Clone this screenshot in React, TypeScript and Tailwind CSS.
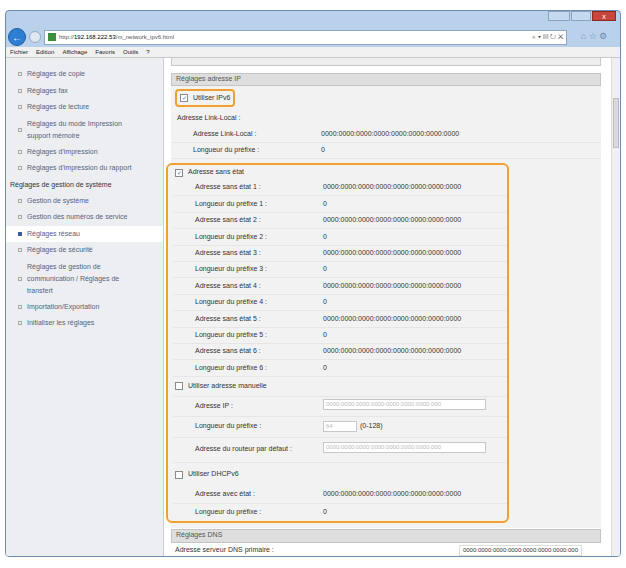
import React from "react";

const Z = "0000:0000:0000:0000:0000:0000:0000:0000";

function Cb({ checked }: { checked?: boolean }) {
  return (
    <span className="inline-flex w-[8px] h-[8px] border border-[#8a8a8a] bg-white items-center justify-center text-[6px] leading-none text-[#3a6fb0] mr-[5px]">
      {checked ? "✓" : ""}
    </span>
  );
}

function Row({ l, v, h = 16 }: { l: string; v?: React.ReactNode; h?: number }) {
  return (
    <div className="flex items-center border-b border-[#e6e6e6]" style={{ height: h }}>
      <div className="w-[150px] pl-[22px]">{l}</div>
      <div className="flex-1 text-[#333]">{v}</div>
    </div>
  );
}

const side: string[] = ["Réglages de copie", "Réglages fax", "Réglages de lecture"];

function SItem({ t, active, lines }: { t: string; active?: boolean; lines?: string[] }) {
  return (
    <div className={`flex items-center pl-[12px] ${active ? "bg-white" : ""}`} style={{ minHeight: 16.5 }}>
      <span className={`w-[4px] h-[4px] mr-[5px] shrink-0 ${active ? "bg-[#3b5a9a]" : "border border-[#aaa]"}`} />
      {lines ? (
        <div className="leading-[12px] py-[2px]">{lines.map((x) => <div key={x}>{x}</div>)}</div>
      ) : (
        <span>{t}</span>
      )}
    </div>
  );
}

const inp = "inline-block w-[163px] h-[11px] border border-[#c8c8c8] bg-white text-[#bbb] text-[6px] leading-[9px] pl-[2px] overflow-hidden whitespace-nowrap";

export default function App() {
  return (
    <div className="w-[626px] h-[568px] bg-white relative" style={{ fontFamily: "'Liberation Sans', Arial, sans-serif" }}>
      <div className="absolute left-[5px] top-[10px] w-[616px] h-[547px] bg-[#b9d1ea] border border-[#6d8cb0] rounded-[4px] flex flex-col overflow-hidden">
        <div className="h-[16px] flex justify-end items-start pr-[4px] gap-[1px]">
          <div className="w-[22px] h-[10px] bg-[#c7d9ee] border border-[#8aa4c4]" />
          <div className="w-[20px] h-[10px] bg-[#c7d9ee] border border-[#8aa4c4]" />
          <div className="w-[24px] h-[10px] bg-[#c9463d] border border-[#8a2a25] text-white text-[7px] leading-[9px] text-center">x</div>
        </div>
        <div className="h-[20px] flex items-center px-[2px] gap-[3px]">
          <div className="w-[18px] h-[18px] rounded-full bg-[#2d7fd3] border border-[#1f5e9f] text-white text-[10px] flex items-center justify-center">←</div>
          <div className="w-[12px] h-[12px] rounded-full bg-[#dfe7f2] border border-[#9aaac0]" />
          <div className="flex-1 h-[15px] bg-white border border-[#8fa5c0] flex items-center px-[3px] text-[6px] text-[#555]">
            <span className="w-[8px] h-[8px] bg-[#3c8d3c] mr-[3px]" />
            <span>http://<b className="text-[#000] font-normal">192.168.222.53</b>/m_network_ipv6.html</span>
            <span className="ml-auto text-[#444] text-[7px]">⌕ ▾ ▤ ↻ ✕</span>
          </div>
          <div className="w-[48px] text-[#6b8bb0] text-[9px] text-center">⌂ ☆ ⚙</div>
        </div>
        <div className="h-[11px] bg-[#f0f0f0] text-[6px] flex items-center gap-[8px] px-[4px] text-[#222] border-b border-[#c8c8c8]">
          <span>Fichier</span><span>Edition</span><span>Affichage</span><span>Favoris</span><span>Outils</span><span>?</span>
        </div>
        <div className="flex-1 flex bg-white text-[7px] text-[#56627a] min-h-0">
          <div className="w-[158px] bg-[#eceef2] border-r border-[#c9ccd2] pt-[8px] leading-[16px]">
            {side.map((t) => <SItem key={t} t={t} />)}
            <SItem t="" lines={["Réglages du mode Impression", "support mémoire"]} />
            <SItem t="Réglages d'impression" />
            <SItem t="Réglages d'impression du rapport" />
            <div className="pl-[4px] text-[#333]">Réglages de gestion de système</div>
            <SItem t="Gestion de système" />
            <SItem t="Gestion des numéros de service" />
            <SItem t="Réglages réseau" active />
            <SItem t="Réglages de sécurité" />
            <SItem t="" lines={["Réglages de gestion de", "communication / Réglages de", "transfert"]} />
            <SItem t="Importation/Exportation" />
            <SItem t="Initialiser les réglages" />
          </div>
          <div className="flex-1 relative px-[7px] text-[#333] overflow-hidden">
            <div className="h-[8px] border border-t-0 border-[#c8c8c8] bg-[#eee] w-[430px]" />
            <div className="mt-[7px] h-[13px] w-[430px] bg-[#dedede] border border-[#c4c4c4] flex items-center px-[4px] text-[#555]">Réglages adresse IP</div>
            <div className="w-[430px] bg-[#f2f2f2]">
              <div className="h-[24px] flex items-center pl-[4px]">
                <span className="border-[2px] border-[#f0a030] rounded-[4px] px-[3px] py-[2px] flex items-center bg-[#f2f2f2]"><Cb checked />Utiliser IPv6</span>
              </div>
              <div className="h-[17px] flex items-center pl-[6px]">Adresse Link-Local :</div>
              <Row l="Adresse Link-Local :" v={Z} />
              <Row l="Longueur du préfixe :" v="0" />
              <div className="ml-[-5px] mr-[92px] mt-[4px] border-[2px] border-[#f0a030] rounded-[6px] bg-[#f2f2f2] pl-[5px]">
                <div className="h-[15px] flex items-center pl-[2px]"><Cb checked />Adresse sans état</div>
                {[1, 2, 3, 4, 5, 6].map((n) => (
                  <React.Fragment key={n}>
                    <Row l={`Adresse sans état ${n} :`} v={Z} h={16.4} />
                    <Row l={`Longueur du préfixe ${n} :`} v="0" h={16.4} />
                  </React.Fragment>
                ))}
                <div className="h-[20px] flex items-center pl-[2px] border-b border-[#e6e6e6]"><Cb />Utiliser adresse manuelle</div>
                <Row l="Adresse IP :" h={20} v={<span className={inp}>0000:0000:0000:0000:0000:0000:0000:000</span>} />
                <Row l="Longueur du préfixe :" h={21} v={<span className="flex items-center"><span className="inline-block w-[34px] h-[11px] border border-[#c8c8c8] bg-white text-[#bbb] text-[6px] leading-[9px] pl-[2px]">64</span><span className="ml-[3px]">(0-128)</span></span>} />
                <Row l="Adresse du routeur par défaut :" h={25} v={<span className={inp}>0000:0000:0000:0000:0000:0000:0000:000</span>} />
                <div className="h-[24px] flex items-center pl-[2px]"><Cb />Utiliser DHCPv6</div>
                <Row l="Adresse avec état :" v={Z} h={17} />
                <div className="flex items-center h-[17px]"><div className="w-[150px] pl-[22px]">Longueur du préfixe :</div><div>0</div></div>
              </div>
              <div className="h-[5px]" />
            </div>
            <div className="mt-[1px] h-[14px] w-[430px] bg-[#dedede] border border-[#c4c4c4] flex items-center px-[4px] text-[#555]">Réglages DNS</div>
            <div className="h-[15px] w-[430px] flex items-center px-[4px]">
              <span>Adresse serveur DNS primaire :</span>
              <span className="ml-auto mr-[15px] bg-white border border-[#ddd] px-[3px] text-[6px]">0000:0000:0000:0000:0000:0000:0000:000</span>
            </div>
            <div className="absolute right-0 top-0 bottom-0 w-[9px] bg-[#f0f0f0] border-l border-[#ddd]">
              <div className="mt-[40px] mx-[1px] h-[50px] bg-[#dadada] border border-[#bbb]" />
            </div>
          </div>
        </div>
      </div>
    </div>
  );
}
